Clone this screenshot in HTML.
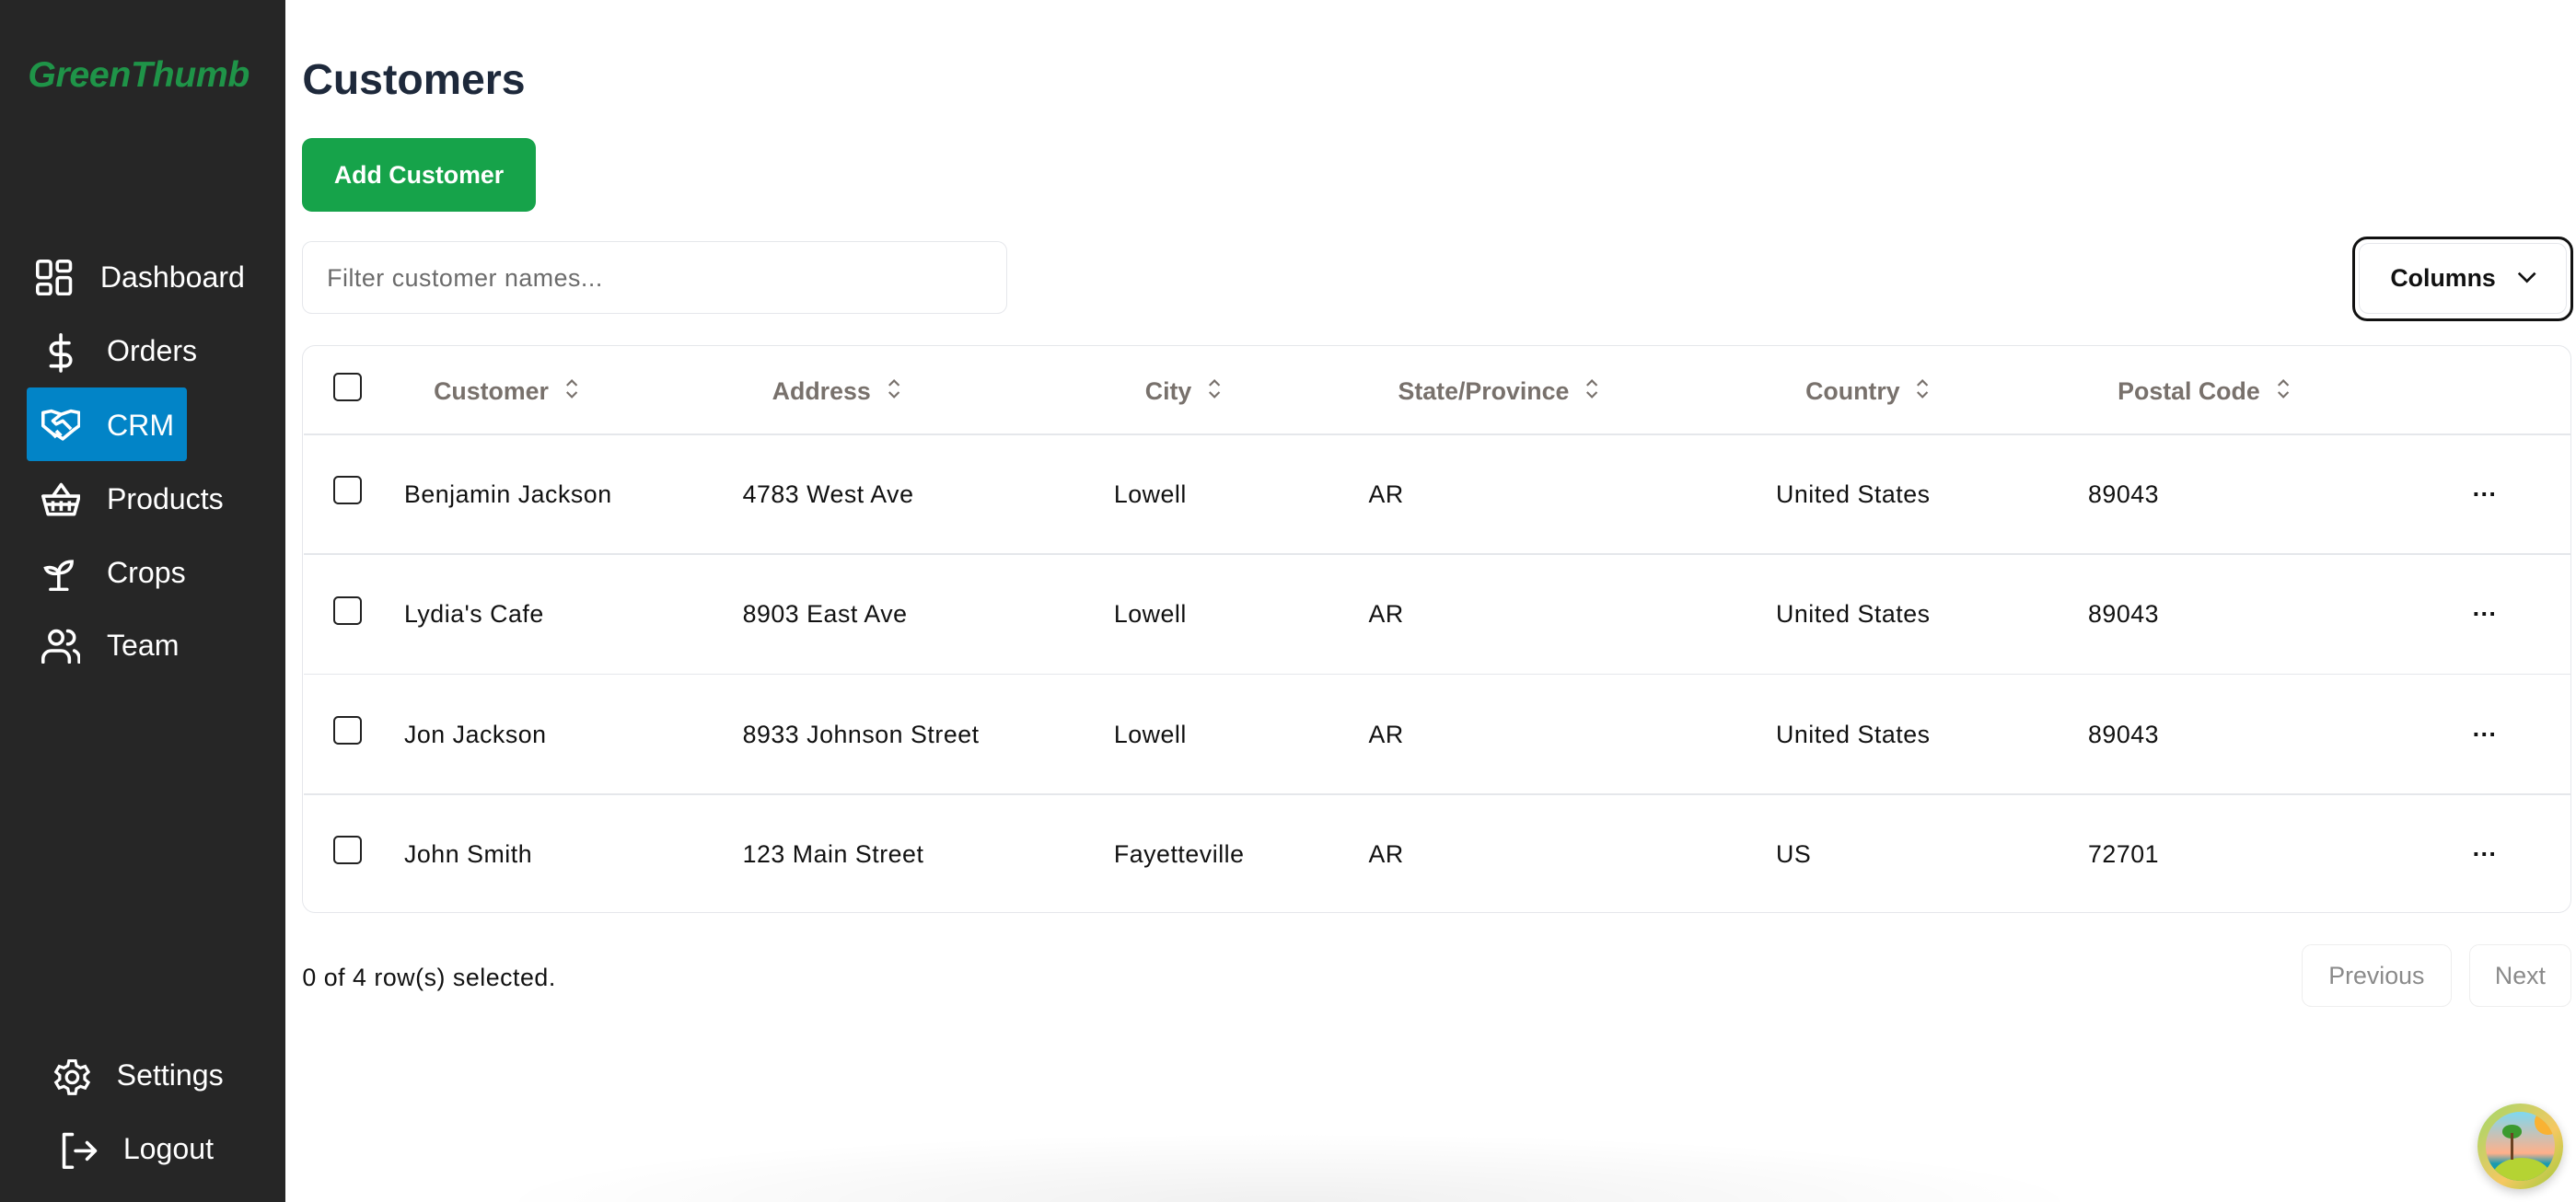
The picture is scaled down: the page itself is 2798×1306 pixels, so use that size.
<!DOCTYPE html>
<html><head><meta charset="utf-8"><style>
html,body{margin:0;padding:0;width:2798px;height:1306px;overflow:hidden;background:#fff;}
#w{zoom:1.78444;width:1568px;height:732px;position:relative;font-family:"Liberation Sans",Arial,sans-serif;color:#111;}
.a{position:absolute;white-space:nowrap;}
#sb{position:absolute;left:0;top:0;width:174px;height:732px;background:#262626;}
.nav{position:absolute;color:#fff;font-size:18px;line-height:22px;}
.nav svg{position:absolute;}
.hd{position:absolute;top:229px;font-size:15px;color:#78716c;font-weight:bold;line-height:18px;}
.hd svg{margin-left:10px;vertical-align:-1px;}
.cell{position:absolute;font-size:15px;line-height:18px;color:#111;letter-spacing:0.3px;}
.dots{position:absolute;left:1505px;font-size:15px;font-weight:bold;line-height:18px;}
.cb{position:absolute;left:203px;width:15px;height:15px;border:1.4px solid #222;border-radius:3px;}
.ln{position:absolute;left:185px;width:1380px;height:1px;background:#e5e7eb;}
</style></head><body><div id="w">
<div id="sb">
<div class="a" style="left:17px;top:33px;font-size:22px;font-weight:bold;font-style:italic;color:#1f9448;letter-spacing:-0.2px;">GreenThumb</div>
<div class="nav" style="left:22px;top:158px;">
<svg width="22" height="22" viewBox="0 0 22 22" fill="none" stroke="#fff" stroke-width="2"><rect x="1" y="1" width="8" height="10" rx="1.5"/><rect x="13" y="1" width="8" height="6" rx="1.5"/><rect x="1" y="15" width="8" height="6" rx="1.5"/><rect x="13" y="11" width="8" height="10" rx="1.5"/></svg>
<span style="position:absolute;left:39px;top:0;">Dashboard</span></div>
<div class="nav" style="left:28px;top:203px;">
<svg width="18" height="24" viewBox="0 0 18 24" fill="none" stroke="#fff" stroke-width="2" stroke-linecap="round"><path d="M9 1v22M14 6H6.5a3.5 3.5 0 0 0 0 7h5a3.5 3.5 0 0 1 0 7H3"/></svg>
<span style="position:absolute;left:37px;top:0;">Orders</span></div>
<div style="position:absolute;left:16px;top:236px;width:98px;height:45px;background:#0284c7;border-radius:2px;"></div>
<div class="nav" style="left:25px;top:248px;">
<svg width="24" height="22" viewBox="0 0 24 22" fill="none" stroke="#fff" stroke-width="2" stroke-linejoin="round"><path d="M1 3l5 -1 6 2 6-2 5 1v8l-4 3-6 5-3-2-3-1-6-5z"/><path d="M12 4l-5 4 2 2 4-2 5 5M9 14l3 3M7 16l2 2"/></svg>
<span style="position:absolute;left:40px;top:0;">CRM</span></div>
<div class="nav" style="left:25px;top:293px;">
<svg width="24" height="22" viewBox="0 0 24 22" fill="none" stroke="#fff" stroke-width="2" stroke-linejoin="round"><path d="M1 9h22l-3 11H4zM7 9l5-7 5 7M7 12v6M12 12v6M17 12v6M3 14h18"/></svg>
<span style="position:absolute;left:40px;top:0;">Products</span></div>
<div class="nav" style="left:26px;top:338px;">
<svg width="22" height="22" viewBox="0 0 22 22" fill="none" stroke="#fff" stroke-width="2" stroke-linecap="round"><path d="M5 21h10M10 21v-10M10 11c-1-3-5-4-8-3 1 3 5 4 8 3zM10 11c0-4 3-7 8-7-0 4-3 7-8 7z"/></svg>
<span style="position:absolute;left:39px;top:0;">Crops</span></div>
<div class="nav" style="left:25px;top:382px;">
<svg width="24" height="22" viewBox="0 0 24 22" fill="none" stroke="#fff" stroke-width="2" stroke-linecap="round"><circle cx="9" cy="6" r="4"/><path d="M1 21v-2a5 5 0 0 1 5-5h6a5 5 0 0 1 5 5v2M16 2a4 4 0 0 1 0 8M20 14a5 5 0 0 1 3 5v2"/></svg>
<span style="position:absolute;left:40px;top:0;">Team</span></div>
<div class="nav" style="left:32px;top:644px;">
<svg width="24" height="24" viewBox="0 0 24 24" fill="none" stroke="#fff" stroke-width="1.8"><circle cx="12" cy="12" r="3.5"/><path d="M10 2h4l.6 3 2.4 1.4 2.9-1 2 3.4-2.3 2v2.4l2.3 2-2 3.4-2.9-1L14.6 19 14 22h-4l-.6-3L7 17.6l-2.9 1-2-3.4 2.3-2v-2.4l-2.3-2 2-3.4 2.9 1L9.4 5z"/></svg>
<span style="position:absolute;left:39px;top:0;">Settings</span></div>
<div class="nav" style="left:37px;top:689px;">
<svg width="24" height="24" viewBox="0 0 24 24" fill="none" stroke="#fff" stroke-width="2" stroke-linecap="round" stroke-linejoin="round"><path d="M7 2H2v20h5M9 12h12M16 7l5 5-5 5"/></svg>
<span style="position:absolute;left:38px;top:0;">Logout</span></div>
</div>

<div class="a" style="left:184px;top:33px;font-size:26px;font-weight:bold;color:#1e293b;">Customers</div>
<div class="a" style="left:184px;top:84px;width:142px;height:45px;background:#16a34a;border-radius:6px;color:#fff;font-size:15px;font-weight:bold;text-align:center;line-height:45px;">Add Customer</div>
<div class="a" style="left:184px;top:147px;width:428px;height:43px;border:1px solid #e5e7eb;border-radius:6px;"></div>
<div class="a" style="left:199px;top:161px;font-size:15px;color:#6b6b6b;letter-spacing:0.3px;">Filter customer names...</div>
<div class="a" style="left:1432px;top:144px;width:131px;height:48px;border:2px solid #111;border-radius:9px;"></div>
<div class="a" style="left:1436px;top:148px;width:125px;height:42px;border:1px solid #e5e7eb;border-radius:6px;"></div>
<div class="a" style="left:1455px;top:161px;font-size:15px;font-weight:bold;color:#111;">Columns</div>
<svg class="a" style="left:1532px;top:165px;" width="12" height="8" viewBox="0 0 12 8" fill="none" stroke="#111" stroke-width="1.5"><path d="M1 1.5l5 5 5-5"/></svg>

<div class="a" style="left:184px;top:210px;width:1380px;height:345px;border:1px solid #e5e7eb;border-radius:8px;"></div>
<div class="ln" style="top:264px;"></div>
<div class="ln" style="top:337px;"></div>
<div class="ln" style="top:410px;"></div>
<div class="ln" style="top:483px;"></div>

<div class="cb" style="top:227px;"></div>
<div class="hd" style="left:264px;">Customer<svg width="8" height="14" viewBox="0 0 8 14" fill="none" stroke="#78716c" stroke-width="1.2"><path d="M1 5l3-3 3 3M1 9l3 3 3-3"/></svg></div>
<div class="hd" style="left:470px;">Address<svg width="8" height="14" viewBox="0 0 8 14" fill="none" stroke="#78716c" stroke-width="1.2"><path d="M1 5l3-3 3 3M1 9l3 3 3-3"/></svg></div>
<div class="hd" style="left:697px;">City<svg width="8" height="14" viewBox="0 0 8 14" fill="none" stroke="#78716c" stroke-width="1.2"><path d="M1 5l3-3 3 3M1 9l3 3 3-3"/></svg></div>
<div class="hd" style="left:851px;">State/Province<svg width="8" height="14" viewBox="0 0 8 14" fill="none" stroke="#78716c" stroke-width="1.2"><path d="M1 5l3-3 3 3M1 9l3 3 3-3"/></svg></div>
<div class="hd" style="left:1099px;">Country<svg width="8" height="14" viewBox="0 0 8 14" fill="none" stroke="#78716c" stroke-width="1.2"><path d="M1 5l3-3 3 3M1 9l3 3 3-3"/></svg></div>
<div class="hd" style="left:1289px;">Postal Code<svg width="8" height="14" viewBox="0 0 8 14" fill="none" stroke="#78716c" stroke-width="1.2"><path d="M1 5l3-3 3 3M1 9l3 3 3-3"/></svg></div>

<div class="cb" style="top:290px;"></div>
<div class="cell" style="left:246px;top:292px;">Benjamin Jackson</div><div class="cell" style="left:452px;top:292px;">4783 West Ave</div><div class="cell" style="left:678px;top:292px;">Lowell</div><div class="cell" style="left:833px;top:292px;">AR</div><div class="cell" style="left:1081px;top:292px;">United States</div><div class="cell" style="left:1271px;top:292px;">89043</div><div class="dots" style="top:292px;">···</div>

<div class="cb" style="top:363px;"></div>
<div class="cell" style="left:246px;top:365px;">Lydia's Cafe</div><div class="cell" style="left:452px;top:365px;">8903 East Ave</div><div class="cell" style="left:678px;top:365px;">Lowell</div><div class="cell" style="left:833px;top:365px;">AR</div><div class="cell" style="left:1081px;top:365px;">United States</div><div class="cell" style="left:1271px;top:365px;">89043</div><div class="dots" style="top:365px;">···</div>

<div class="cb" style="top:436px;"></div>
<div class="cell" style="left:246px;top:438px;">Jon Jackson</div><div class="cell" style="left:452px;top:438px;">8933 Johnson Street</div><div class="cell" style="left:678px;top:438px;">Lowell</div><div class="cell" style="left:833px;top:438px;">AR</div><div class="cell" style="left:1081px;top:438px;">United States</div><div class="cell" style="left:1271px;top:438px;">89043</div><div class="dots" style="top:438px;">···</div>

<div class="cb" style="top:509px;"></div>
<div class="cell" style="left:246px;top:511px;">John Smith</div><div class="cell" style="left:452px;top:511px;">123 Main Street</div><div class="cell" style="left:678px;top:511px;">Fayetteville</div><div class="cell" style="left:833px;top:511px;">AR</div><div class="cell" style="left:1081px;top:511px;">US</div><div class="cell" style="left:1271px;top:511px;">72701</div><div class="dots" style="top:511px;">···</div>

<div class="cell" style="left:184px;top:586px;">0 of 4 row(s) selected.</div>
<div class="a" style="left:1401px;top:575px;width:90px;height:37px;border:1px solid #eee;border-radius:6px;color:#8a8a8a;font-size:15px;text-align:center;line-height:37px;">Previous</div>
<div class="a" style="left:1503px;top:575px;width:61px;height:37px;border:1px solid #eee;border-radius:6px;color:#8a8a8a;font-size:15px;text-align:center;line-height:37px;">Next</div>

<div class="a" style="left:300px;top:690px;width:970px;height:42px;background:radial-gradient(ellipse 50% 100% at 50% 100%,rgba(0,0,0,0.06),rgba(0,0,0,0) 100%);"></div>

<div class="a" style="left:1508px;top:672px;width:52px;height:52px;border-radius:50%;background:linear-gradient(135deg,#9ed86a,#f5c862 60%,#9ccc3a);box-shadow:0 2px 6px rgba(0,0,0,0.2);overflow:hidden;">
<div style="position:absolute;left:5px;top:5px;width:42px;height:42px;border-radius:50%;background:linear-gradient(180deg,#7fd8f0,#ffb08a 60%,#1a9bb0 75%);overflow:hidden;">
<div style="position:absolute;right:-4px;top:-2px;width:16px;height:16px;border-radius:50%;background:#f9b233;"></div>
<div style="position:absolute;left:4px;top:28px;width:36px;height:24px;border-radius:50%;background:#b5d333;"></div>
<div style="position:absolute;left:10px;top:8px;width:12px;height:8px;border-radius:50%;background:#3c9a2e;"></div>
<div style="position:absolute;left:15px;top:13px;width:2px;height:16px;background:#6b4222;"></div>
</div></div>
</div></body></html>
